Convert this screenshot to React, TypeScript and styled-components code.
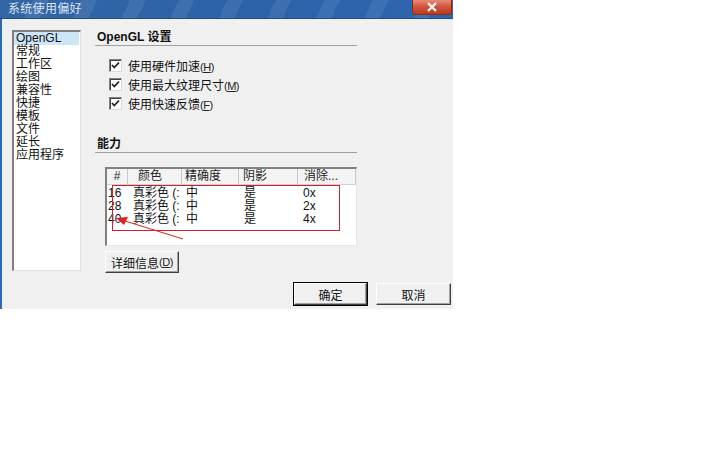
import styled, { createGlobalStyle } from "styled-components";

const GlobalStyle = createGlobalStyle`
  html, body {
    margin: 0;
    padding: 0;
    background: #ffffff;
  }
  body {
    width: 720px;
    height: 450px;
    overflow: hidden;
    font-family: "Liberation Sans", "Noto Sans CJK SC", sans-serif;
    font-size: 12px;
    color: #000;
  }
`;

const NAV_ITEMS = ["OpenGL", "常规", "工作区", "绘图", "兼容性", "快捷", "模板", "文件", "延长", "应用程序"];

const OPTIONS = [
  { label: "使用硬件加速", key: "H" },
  { label: "使用最大纹理尺寸", key: "M" },
  { label: "使用快速反馈", key: "F" },
];

const COLUMNS = [
  { title: "#", width: 21, pad: 0, center: true },
  { title: "颜色", width: 54, pad: 10, center: false },
  { title: "精确度", width: 57, pad: 3, center: false },
  { title: "阴影", width: 59, pad: 4, center: false },
  { title: "消除...", width: 58, pad: 6, center: false },
];

const ROWS = [
  ["16", "真彩色 (:", "中", "是", "0x"],
  ["28", "真彩色 (:", "中", "是", "2x"],
  ["40", "真彩色 (:", "中", "是", "4x"],
];

const CELL_PADS = [1, 5, 4, 5, 5];

function Mnemonic({ k }: { k: string }) {
  return (
    <S.Mnemonic>
      (<u>{k}</u>)
    </S.Mnemonic>
  );
}

function CheckMark() {
  return (
    <S.CheckBox>
      <svg width="9" height="9" viewBox="0 0 9 9">
        <path d="M1 4 L3.3 6.5 L8 1.5" fill="none" stroke="#222" strokeWidth="1.8" />
      </svg>
    </S.CheckBox>
  );
}

export default function App() {
  return (
    <>
      <GlobalStyle />
      <S.Window>
        <S.TitleBar>
          <S.TitleText>系统使用偏好</S.TitleText>
          <S.CloseButton>
            <svg width="12" height="10" viewBox="0 0 12 10">
              <path d="M2 1 L10 9 M10 1 L2 9" stroke="#fff" strokeWidth="2.2" />
            </svg>
          </S.CloseButton>
        </S.TitleBar>

        <S.Body>
          <S.Main>
            <S.NavList>
              {NAV_ITEMS.map((item, i) => (
                <S.NavItem key={item} $active={i === 0}>
                  {item}
                </S.NavItem>
              ))}
            </S.NavList>

            <S.Content>
              <S.SectionTitle>OpenGL 设置</S.SectionTitle>
              <S.OptionList>
                {OPTIONS.map((o) => (
                  <S.OptionRow key={o.key}>
                    <CheckMark />
                    <span>
                      {o.label}
                      <Mnemonic k={o.key} />
                    </span>
                  </S.OptionRow>
                ))}
              </S.OptionList>

              <S.SectionTitle $gap={24}>能力</S.SectionTitle>

              <S.ListView>
                <S.HeaderRow>
                  {COLUMNS.map((c) => (
                    <S.HeaderCell key={c.title} $width={c.width} $pad={c.pad} $center={c.center}>
                      {c.title}
                    </S.HeaderCell>
                  ))}
                </S.HeaderRow>
                <S.Rows>
                  {ROWS.map((row) => (
                    <S.DataRow key={row[0]}>
                      {row.map((cell, i) => (
                        <S.DataCell key={i} $width={COLUMNS[i].width} $pad={CELL_PADS[i]}>
                          {cell}
                        </S.DataCell>
                      ))}
                    </S.DataRow>
                  ))}
                </S.Rows>
                <S.Highlight />
                <S.Arrow width="80" height="40" viewBox="0 0 80 40">
                  <path d="M70 35 L12 17" stroke="#e02020" strokeWidth="1" fill="none" />
                  <path d="M3 14 L15 13 L11 21 Z" fill="#e02020" />
                </S.Arrow>
              </S.ListView>

              <S.DetailsButton $width={74}>
                详细信息<Mnemonic k="D" />
              </S.DetailsButton>
            </S.Content>
          </S.Main>

          <S.Footer>
            <S.Button $width={73} $default>
              确定
            </S.Button>
            <S.Button $width={75}>取消</S.Button>
          </S.Footer>
        </S.Body>
      </S.Window>
    </>
  );
}

const Button = styled.div<{ $width: number; $default?: boolean }>`
  width: ${(p) => p.$width}px;
  height: 22px;
  box-sizing: border-box;
  margin-top: 5px;
  display: flex;
  align-items: center;
  justify-content: center;
  background: #f0f0f0;
  font-size: 12px;
  color: #111;
  border-top: 1px solid #fff;
  border-left: 1px solid #fff;
  border-right: 1px solid #404040;
  border-bottom: 1px solid #404040;
  box-shadow: ${(p) =>
    p.$default ? "0 0 0 1px #000, inset -1px -1px 0 #a0a0a0" : "inset -1px -1px 0 #a0a0a0"};
`;

const S = {
  Window: styled.div`
    width: 453px;
    display: flex;
    flex-direction: column;
  `,

  TitleBar: styled.div`
    height: 18px;
    display: flex;
    align-items: flex-start;
    justify-content: space-between;
    background:
      repeating-linear-gradient(
        115deg,
        rgba(255, 255, 255, 0) 0px,
        rgba(255, 255, 255, 0) 30px,
        rgba(255, 255, 255, 0.08) 30px,
        rgba(255, 255, 255, 0.08) 44px
      ),
      linear-gradient(90deg, #3466a6 0%, #2c62a8 50%, #2e66ae 100%);
    border-bottom: 1px solid #1f4d86;
  `,

  TitleText: styled.div`
    padding: 2px 0 0 8px;
    font-size: 12px;
    line-height: 14px;
    color: #dce6f2;
    letter-spacing: 0.3px;
  `,

  CloseButton: styled.div`
    width: 40px;
    height: 15px;
    margin-right: 1px;
    display: flex;
    align-items: center;
    justify-content: center;
    background: linear-gradient(180deg, #e88a78 0%, #d2583c 45%, #b93a22 100%);
    border: 1px solid #8e2a18;
    border-top: none;
    border-radius: 0 0 3px 3px;
    box-sizing: border-box;
  `,

  Body: styled.div`
    background: #f0f0f0;
    border-left: 2px solid #2f68b0;
    padding: 11px 2px 4px 10px;
    display: flex;
    flex-direction: column;
  `,

  Main: styled.div`
    display: flex;
    gap: 14px;
  `,

  NavList: styled.div`
    width: 69px;
    height: 241px;
    box-sizing: border-box;
    background: #fff;
    border-top: 2px solid #808080;
    border-left: 2px solid #808080;
    border-right: 1px solid #e0e0e0;
    border-bottom: 1px solid #e0e0e0;
  `,

  NavItem: styled.div<{ $active?: boolean }>`
    height: 13px;
    line-height: 13px;
    padding-left: 2px;
    margin-right: 1px;
    font-size: 12px;
    color: #111;
    background: ${(p) => (p.$active ? "#cde6f7" : "transparent")};
  `,

  Content: styled.div`
    width: 262px;
    display: flex;
    flex-direction: column;
  `,

  SectionTitle: styled.div<{ $gap?: number }>`
    margin-top: ${(p) => p.$gap ?? 0}px;
    font-weight: bold;
    font-size: 12px;
    line-height: 14px;
    padding: 0 0 1px 2px;
    border-bottom: 1px solid #a0a0a0;
    color: #111;
  `,

  OptionList: styled.div`
    margin-top: 10px;
    padding-left: 14px;
    display: flex;
    flex-direction: column;
  `,

  OptionRow: styled.div`
    height: 19px;
    display: flex;
    align-items: center;
    gap: 6px;
    font-size: 12px;
    color: #111;
  `,

  CheckBox: styled.span`
    width: 13px;
    height: 13px;
    box-sizing: border-box;
    background: #fff;
    border-top: 1px solid #808080;
    border-left: 1px solid #808080;
    border-right: 1px solid #d8d8d8;
    border-bottom: 1px solid #d8d8d8;
    box-shadow: inset 1px 1px 0 #404040;
    display: flex;
    align-items: center;
    justify-content: center;
  `,

  Mnemonic: styled.span`
    font-size: 11px;
    letter-spacing: -0.5px;
    color: #222;
  `,

  ListView: styled.div`
    position: relative;
    margin: 14px 0 0 10px;
    width: 252px;
    height: 79px;
    box-sizing: border-box;
    background: #fff;
    border-top: 2px solid #808080;
    border-left: 2px solid #808080;
    border-right: 1px solid #e8e8e8;
    border-bottom: 1px solid #e8e8e8;
  `,

  HeaderRow: styled.div`
    display: flex;
    height: 15px;
    background: #f4f4f4;
    border-bottom: 1px solid #d0d0d0;
  `,

  HeaderCell: styled.div<{ $width: number; $pad: number; $center?: boolean }>`
    width: ${(p) => p.$width}px;
    box-sizing: border-box;
    padding-left: ${(p) => p.$pad}px;
    text-align: ${(p) => (p.$center ? "center" : "left")};
    border-right: 1px solid #c8c8c8;
    font-size: 12px;
    line-height: 15px;
    color: #222;
    white-space: nowrap;
    overflow: hidden;
  `,

  Rows: styled.div`
    padding-top: 2px;
    display: flex;
    flex-direction: column;
  `,

  DataRow: styled.div`
    display: flex;
    height: 13px;
  `,

  DataCell: styled.div<{ $width: number; $pad: number }>`
    width: ${(p) => p.$width}px;
    box-sizing: border-box;
    padding-left: ${(p) => p.$pad}px;
    font-size: 12px;
    line-height: 13px;
    color: #111;
    white-space: nowrap;
  `,

  Highlight: styled.div`
    position: absolute;
    left: 5px;
    top: 16px;
    width: 228px;
    height: 46px;
    box-sizing: border-box;
    border: 1px solid #d02030;
  `,

  Arrow: styled.svg`
    position: absolute;
    left: 6px;
    top: 35px;
    overflow: visible;
  `,

  Button,

  DetailsButton: styled(Button)`
    margin-left: 10px;
  `,

  Footer: styled.div`
    margin-top: 5px;
    display: flex;
    justify-content: flex-end;
    gap: 9px;
  `,
};
